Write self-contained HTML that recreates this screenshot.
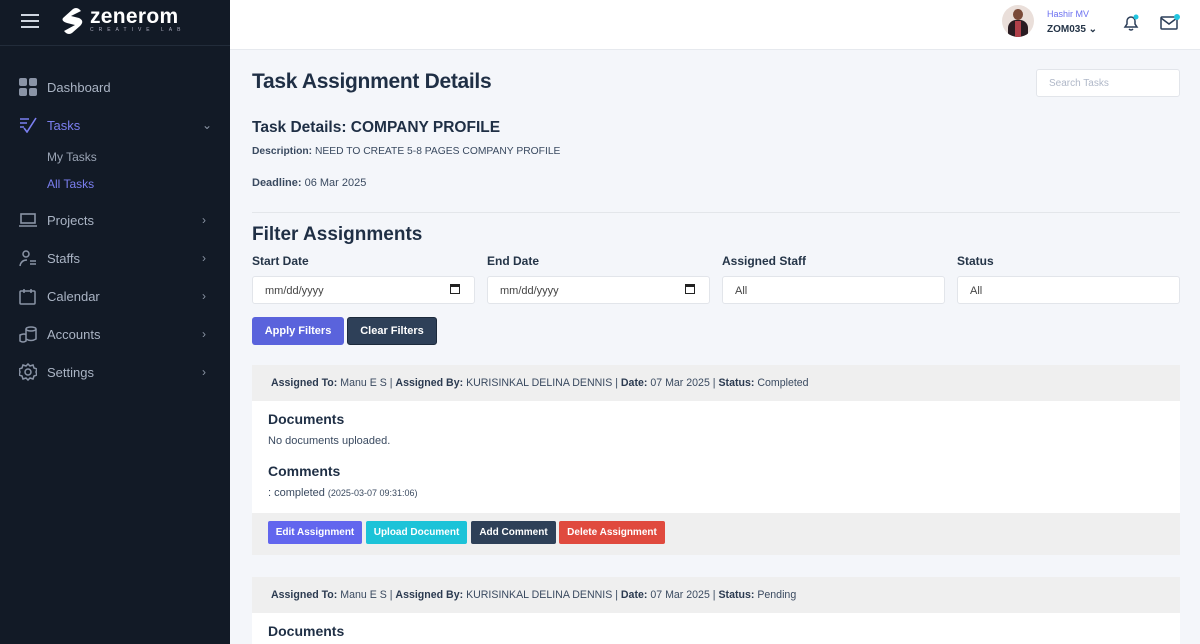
<!DOCTYPE html>
<html><head><meta charset="utf-8"><style>
*{box-sizing:border-box;margin:0;padding:0}
body{width:1200px;height:644px;overflow:hidden;font-family:"Liberation Sans",sans-serif;background:#f4f6fa;position:relative;color:#243447}
.sb{position:absolute;left:0;top:0;width:230px;height:644px;background:#121a26}
.sbtop{height:46px;border-bottom:1px solid #222c3a;position:relative}
.nav{position:absolute;left:0;width:230px;height:30px;display:flex;align-items:center;font-size:13px;color:#aab4c4}
.nav svg.i{position:absolute;left:19px}
.nav span{position:absolute;left:47px}
.nav .ch{position:absolute;left:202px;color:#8a94a4;font-size:12px}
.sub{position:absolute;left:47px;font-size:12px;color:#9aa4b4}
.hdr{position:absolute;left:230px;top:0;width:970px;height:50px;background:#fff;border-bottom:1px solid #e6e9ee}
.main{position:absolute;left:252px}
h1{font-size:21px;font-weight:bold;color:#1f2f45;letter-spacing:-.3px}
.lbl{font-size:12px;font-weight:bold;color:#253548;position:absolute}
.inp{position:absolute;height:28px;background:#fff;border:1px solid #e2e5ea;border-radius:3px;font-size:11px;color:#444;padding:8px 0 0 12px}
.btn{position:absolute;height:28px;border-radius:3px;color:#fff;font-size:11px;font-weight:bold;display:flex;align-items:center;justify-content:center}
.bar{position:absolute;left:252px;width:928px;height:36px;background:#efefef;font-size:10.6px;color:#3a4a60;padding:12px 0 0 19px}
.bar b{color:#2b3a50}
.card{position:absolute;left:252px;width:928px;background:#fff}
.sbtn{position:absolute;height:23px;border-radius:2px;color:#fff;font-size:10px;font-weight:bold;display:flex;align-items:center;justify-content:center}
</style></head><body>
<div class="sb">
 <div class="sbtop">
  <div style="position:absolute;left:21px;top:14px;width:18px;height:2px;background:#cfd6e0;box-shadow:0 6px 0 #cfd6e0,0 12px 0 #cfd6e0"></div>
  <svg style="position:absolute;left:59px;top:6px" width="30" height="30" viewBox="0 0 30 30"><path d="M4 12 L14 3 Q17 1 20 3 L22 5 L12 10 L20 12 Q26 15 21 20 L13 27 Q10 29 7 27 L5 25 L16 19 L8 17 Q2 15 4 12Z" fill="#fff"/></svg>
  <div style="position:absolute;left:90px;top:5px;font-size:21px;font-weight:bold;color:#fff;letter-spacing:.3px">zenerom</div>
  <div style="position:absolute;left:90px;top:27px;font-size:5px;color:#aab;letter-spacing:5px">CREATIVE LAB</div>
 </div>
 <div class="nav" style="top:72px"><svg class="i" width="18" height="18"><rect x="0" y="0" width="8" height="8" rx="2" fill="#8a94a6"/><rect x="10" y="0" width="8" height="8" rx="2" fill="#8a94a6"/><rect x="0" y="10" width="8" height="8" rx="2" fill="#8a94a6"/><rect x="10" y="10" width="8" height="8" rx="2" fill="#8a94a6"/></svg><span>Dashboard</span></div>
 <div class="nav" style="top:110px"><svg class="i" width="18" height="16" fill="none" stroke="#7b7ff0" stroke-width="1.6"><path d="M1 2h9M1 6h7M1 10h4M5 11l3 4 9-14"/></svg><span style="color:#7b7ff0">Tasks</span><i class="ch" style="font-style:normal">⌄</i></div>
 <div class="sub" style="top:150px">My Tasks</div>
 <div class="sub" style="top:177px;color:#7b7ff0">All Tasks</div>
 <div class="nav" style="top:205px"><svg class="i" width="18" height="14" fill="none" stroke="#8a94a6" stroke-width="1.6"><rect x="2" y="1" width="14" height="9"/><path d="M0 13h18"/></svg><span>Projects</span><i class="ch" style="font-style:normal">›</i></div>
 <div class="nav" style="top:243px"><svg class="i" width="18" height="17" fill="none" stroke="#8a94a6" stroke-width="1.5"><circle cx="7" cy="4" r="3"/><path d="M1 16q1-6 7-6M11 11h6M11 14h6"/></svg><span>Staffs</span><i class="ch" style="font-style:normal">›</i></div>
 <div class="nav" style="top:281px"><svg class="i" width="18" height="17" fill="none" stroke="#8a94a6" stroke-width="1.5"><rect x="1" y="3" width="15" height="13" rx="1"/><path d="M5 1v4M12 1v4"/></svg><span>Calendar</span><i class="ch" style="font-style:normal">›</i></div>
 <div class="nav" style="top:319px"><svg class="i" width="18" height="17" fill="none" stroke="#8a94a6" stroke-width="1.5"><ellipse cx="12" cy="3" rx="5" ry="2"/><path d="M7 3v10q5 3 10 0V3M1 9q5-2 6 0v6q-3 2-6 0z"/></svg><span>Accounts</span><i class="ch" style="font-style:normal">›</i></div>
 <div class="nav" style="top:357px"><svg class="i" width="18" height="18" fill="none" stroke="#8a94a6" stroke-width="1.5"><circle cx="9" cy="9" r="3"/><path d="M9 1l2 2 3-1 1 3 3 1-1 3 1 3-3 1-1 3-3-1-2 2-2-2-3 1-1-3-3-1 1-3-1-3 3-1 1-3 3 1z"/></svg><span>Settings</span><i class="ch" style="font-style:normal">›</i></div>
</div>
<div class="hdr">
 <div style="position:absolute;left:772px;top:5px;width:32px;height:32px;border-radius:50%;background:#eadfda;overflow:hidden">
  <div style="position:absolute;left:11px;top:4px;width:10px;height:11px;border-radius:50%;background:#7a4a38"></div>
  <div style="position:absolute;left:6px;top:15px;width:20px;height:20px;border-radius:8px 8px 0 0;background:#2a1c22"></div>
  <div style="position:absolute;left:13px;top:16px;width:6px;height:16px;background:#b0404a"></div>
 </div>
 <div style="position:absolute;left:817px;top:9px;font-size:9px;color:#6a6ff0">Hashir MV</div>
 <div style="position:absolute;left:817px;top:24px;font-size:10px;font-weight:bold;color:#253548">ZOM035 ⌄</div>
 <svg style="position:absolute;left:892px;top:14px" width="18" height="18" fill="none" stroke="#2c3e58" stroke-width="1.5"><path d="M3 13h12l-2-3V7a4 4 0 0 0-8 0v3zM7 15q2 2 4 0"/><circle cx="14" cy="3" r="2.5" fill="#22c5e0" stroke="none"/></svg>
 <svg style="position:absolute;left:930px;top:13px" width="20" height="18" fill="none" stroke="#2c3e58" stroke-width="1.5"><rect x="1" y="4" width="16" height="12" rx="1"/><path d="M1 5l8 6 8-6"/><circle cx="17" cy="4" r="3" fill="#22c5e0" stroke="none"/></svg>
</div>
<div style="position:absolute;left:1036px;top:69px;width:144px;height:28px;background:#fff;border:1px solid #e2e5ea;border-radius:3px;font-size:10px;color:#b0b8c8;padding:8px 0 0 12px">Search Tasks</div>
<h1 class="main" style="top:70px">Task Assignment Details</h1>
<div class="main" style="top:119px;font-size:15.5px;font-weight:bold;color:#1f2f45">Task Details: COMPANY PROFILE</div>
<div class="main" style="top:146px;font-size:10.3px;color:#3a4a60"><b>Description:</b> NEED TO CREATE 5-8 PAGES COMPANY PROFILE</div>
<div class="main" style="top:177px;font-size:11px;color:#3a4a60"><b>Deadline:</b> 06 Mar 2025</div>
<div style="position:absolute;left:252px;top:212px;width:928px;height:1px;background:#e3e6ea"></div>
<div class="main" style="top:224px;font-size:19px;font-weight:bold;color:#1f2f45">Filter Assignments</div>
<div class="lbl" style="left:252px;top:254px">Start Date</div>
<div class="lbl" style="left:487px;top:254px">End Date</div>
<div class="lbl" style="left:722px;top:254px">Assigned Staff</div>
<div class="lbl" style="left:957px;top:254px">Status</div>
<div class="inp" style="left:252px;top:276px;width:223px">mm/dd/yyyy<span style="position:absolute;right:14px;top:7px;width:10px;height:10px;border:1.5px solid #222;border-top-width:3px"></span></div>
<div class="inp" style="left:487px;top:276px;width:223px">mm/dd/yyyy<span style="position:absolute;right:14px;top:7px;width:10px;height:10px;border:1.5px solid #222;border-top-width:3px"></span></div>
<div class="inp" style="left:722px;top:276px;width:223px">All</div>
<div class="inp" style="left:957px;top:276px;width:223px">All</div>
<div class="btn" style="left:252px;top:317px;width:92px;background:#5a63dc">Apply Filters</div>
<div class="btn" style="left:347px;top:317px;width:90px;background:#2e4058;border:1px solid #1c2a3c">Clear Filters</div>
<div class="bar" style="top:365px"><b>Assigned To:</b> Manu E S | <b>Assigned By:</b> KURISINKAL DELINA DENNIS | <b>Date:</b> 07 Mar 2025 | <b>Status:</b> Completed</div>
<div class="card" style="top:401px;height:112px">
 <div style="position:absolute;left:16px;top:10px;font-size:14px;font-weight:bold;color:#1f2f45">Documents</div>
 <div style="position:absolute;left:16px;top:34px;font-size:11px;color:#3a4a60">No documents uploaded.</div>
 <div style="position:absolute;left:16px;top:62px;font-size:14px;font-weight:bold;color:#1f2f45">Comments</div>
 <div style="position:absolute;left:16px;top:86px;font-size:11px;color:#3a4a60">: completed <span style="font-size:9px">(2025-03-07 09:31:06)</span></div>
</div>
<div style="position:absolute;left:252px;top:513px;width:928px;height:42px;background:#efefef"></div>
<div class="sbtn" style="left:268px;top:521px;width:94px;background:#6266ee">Edit Assignment</div>
<div class="sbtn" style="left:366px;top:521px;width:101px;background:#1cc3d8">Upload Document</div>
<div class="sbtn" style="left:471px;top:521px;width:85px;background:#2e4058">Add Comment</div>
<div class="sbtn" style="left:559px;top:521px;width:106px;background:#e04a3e">Delete Assignment</div>
<div class="bar" style="top:577px"><b>Assigned To:</b> Manu E S | <b>Assigned By:</b> KURISINKAL DELINA DENNIS | <b>Date:</b> 07 Mar 2025 | <b>Status:</b> Pending</div>
<div class="card" style="top:613px;height:31px">
 <div style="position:absolute;left:16px;top:10px;font-size:14px;font-weight:bold;color:#1f2f45">Documents</div>
</div>
</body></html>
